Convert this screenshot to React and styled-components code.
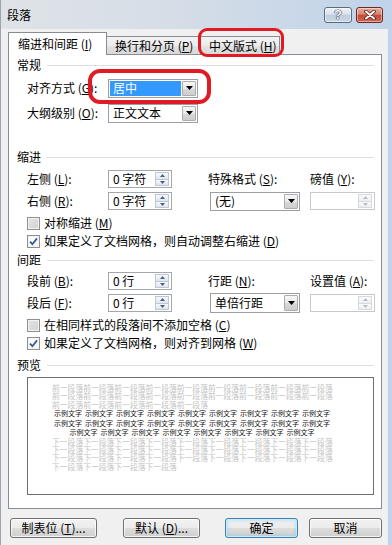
import React from 'react';
import styled, { createGlobalStyle } from 'styled-components';

const GlobalStyle = createGlobalStyle`
  html, body { margin: 0; padding: 0; background: #f0f0f0; }
  body { font-family: "Noto Sans CJK SC", "Liberation Sans", sans-serif; font-size: 12px; color: #000; }
  * { box-sizing: border-box; }
`;

const Window = styled.div`
  width: 392px;
  height: 545px;
  display: flex;
  flex-direction: column;
  background: linear-gradient(90deg, #dfe3e8 0%, #d5dde6 45%, #c0d3ea 100%);
  border-left: 1px solid #9aa5b1;
  overflow: hidden;
`;

const TitleBar = styled.div`
  flex: none;
  height: 29px;
  display: flex;
  align-items: center;
  gap: 4px;
  padding: 0 9px 0 6px;
`;

const TitleText = styled.div`
  flex: 1;
  font-size: 12px;
  line-height: 14px;
  margin-top: 1px;
`;

const CaptionButton = styled.div`
  width: ${(p) => p.$w}px;
  height: 16px;
  border-radius: 3px;
  border: 1px solid ${(p) => (p.$close ? '#6b2b22' : '#5b6d83')};
  background: ${(p) =>
    p.$close
      ? 'linear-gradient(#eaa99c, #d98472 45%, #c24b36 50%, #cf6650 100%)'
      : 'linear-gradient(#eef2f7, #d9e2ed 45%, #bfcddd 50%, #cbd8e7 100%)'};
  box-shadow: inset 0 0 0 1px rgba(255, 255, 255, 0.45);
  display: flex;
  align-items: center;
  justify-content: center;
`;

const HelpGlyph = styled.span`
  font-family: "Liberation Sans", sans-serif;
  font-weight: bold;
  font-size: 13px;
  line-height: 13px;
  color: #f4f6f9;
  text-shadow: 0 0 1px #2f3d50, 0 0 1px #2f3d50, 0 0 1px #2f3d50;
`;

const Body = styled.div`
  flex: 1;
  background: #f0f0f0;
  margin-right: 4px;
  padding: 3px 5px 0 7px;
  display: flex;
  flex-direction: column;
  border-right: 1px solid #e6eef7;
`;

const TabStrip = styled.div`
  display: flex;
  align-items: flex-end;
  height: 23px;
  margin-bottom: -1px;
  position: relative;
  z-index: 2;
`;

const Tab = styled.div`
  position: relative;
  width: ${(p) => p.$w}px;
  height: ${(p) => (p.$active ? 23 : 18)}px;
  margin-bottom: ${(p) => (p.$active ? 0 : 1)}px;
  margin-left: ${(p) => (p.$first ? 0 : -1)}px;
  border: 1px solid #898c95;
  border-bottom: none;
  background: ${(p) =>
    p.$active ? '#ffffff' : 'linear-gradient(#f3f3f3, #ececec 50%, #e2e2e2 51%, #d9d9d9)'};
  display: flex;
  align-items: center;
  padding-left: ${(p) => p.$pl}px;
  padding-bottom: ${(p) => (p.$active ? 1 : 0)}px;
  font-size: 12px;
  line-height: 14px;
  white-space: nowrap;
`;

const TabMark = styled.div`
  position: absolute;
  left: -3px;
  top: -9px;
  width: 86px;
  height: 29px;
  border: 3px solid #e01b24;
  border-radius: 9px;
  pointer-events: none;
`;

const Panel = styled.div`
  height: 455px;
  background: #fff;
  border: 1px solid #898c95;
  padding: 3px 7px 0 8px;
  display: flex;
  flex-direction: column;
`;

const SectionTitle = styled.div`
  display: flex;
  align-items: center;
  gap: 6px;
  height: 14px;
  line-height: 14px;
  margin-top: ${(p) => p.$mt || 0}px;
  white-space: nowrap;
  &::after {
    content: '';
    flex: 1;
    height: 1px;
    background: #dcdfe3;
  }
`;

const GeneralRows = styled.div`
  display: flex;
  flex-direction: column;
  gap: 3px;
  margin: 5px 0 0 10px;
`;

const FormRow = styled.div`
  display: grid;
  grid-template-columns: 81px auto;
  align-items: center;
  height: 22px;
`;

const Label = styled.div`
  font-size: 12px;
  line-height: 14px;
  white-space: nowrap;
  margin-left: ${(p) => p.$ml || 0}px;
`;

const U = styled.span`
  text-decoration: underline;
  text-underline-offset: 1px;
`;

const SelectBox = styled.div`
  position: relative;
  width: ${(p) => p.$w}px;
  height: ${(p) => p.$h || 19}px;
  border: 1px solid #9a9ea5;
  background: #fff;
  display: flex;
  padding: 1px;
`;

const SelectValue = styled.div`
  flex: 1;
  display: flex;
  align-items: center;
  padding-left: 3px;
  margin-right: 1px;
  font-size: 12px;
  line-height: 14px;
  white-space: nowrap;
  background: ${(p) => (p.$selected ? '#3399ff' : 'transparent')};
  color: ${(p) => (p.$selected ? '#fff' : '#000')};
`;

const DropButton = styled.div`
  width: 14px;
  border: 1px solid #acacac;
  border-radius: 1px;
  background: linear-gradient(#f7f7f7, #e8e8e8 50%, #d9d9d9 51%, #cdcdcd);
  display: flex;
  align-items: center;
  justify-content: center;
`;

const SelectMark = styled.div`
  position: absolute;
  left: -21px;
  top: -11px;
  width: 123px;
  height: 35px;
  border: 4px solid #e01b24;
  border-radius: 12px;
  pointer-events: none;
`;

const SpinBox = styled.div`
  width: ${(p) => p.$w}px;
  height: 18px;
  border: 1px solid ${(p) => (p.$disabled ? '#c6c9ce' : '#a3a7ae')};
  background: #fff;
  display: flex;
  padding: 1px;
`;

const SpinText = styled.div`
  flex: 1;
  display: flex;
  align-items: center;
  padding-left: 3px;
  font-size: 12px;
  line-height: 14px;
  white-space: nowrap;
`;

const SpinButtons = styled.div`
  width: 14px;
  margin-right: 1px;
  display: flex;
  flex-direction: column;
`;

const SpinHalf = styled.div`
  flex: 1;
  border: 1px solid ${(p) => (p.$disabled ? '#d6d9de' : '#c1c7d1')};
  background: ${(p) =>
    p.$disabled ? 'linear-gradient(#fafafa, #eeeeee)' : 'linear-gradient(#f7f9fc, #dfe5ee)'};
  display: flex;
  align-items: center;
  justify-content: center;
  & + & {
    border-top: none;
  }
`;

const FieldGrid = styled.div`
  display: grid;
  grid-template-columns: 81px 64px 38px 100px 65px;
  grid-auto-rows: 22px;
  align-items: center;
  margin: ${(p) => p.$mt}px 0 0 10px;
`;

const CheckRows = styled.div`
  display: flex;
  flex-direction: column;
  margin: 2px 0 0 10px;
`;

const CheckRow = styled.div`
  height: 18px;
  display: flex;
  align-items: center;
  gap: 4px;
  font-size: 12px;
  line-height: 14px;
  white-space: nowrap;
`;

const CheckBoxBox = styled.span`
  flex: none;
  width: 13px;
  height: 13px;
  border: 1px solid #8e8f8f;
  background: ${(p) =>
    p.$checked ? 'linear-gradient(135deg, #ffffff, #eef0f3)' : 'linear-gradient(135deg, #e4e4e4, #d2d2d2)'};
  box-shadow: inset 0 0 0 1px #f3f3f3;
  display: flex;
  align-items: center;
  justify-content: center;
`;

const Preview = styled.div`
  margin: 5px 0 0 10px;
  height: 118px;
  border: 1px solid #6e6e6e;
  background: #fff;
  padding: 6px 0 0 24px;
`;

const GrayLine = styled.div`
  height: 8.4px;
  font-size: 7.8px;
  line-height: 8.4px;
  color: #c4c4c4;
  white-space: nowrap;
`;

const SampleLine = styled.div`
  width: 280px;
  height: 9.5px;
  display: flex;
  justify-content: center;
  gap: 3px;
  font-size: 7px;
  line-height: 9.5px;
  color: #111;
  white-space: nowrap;
`;

const ButtonRow = styled.div`
  display: flex;
  margin-top: 9px;
`;

const Button = styled.div`
  width: ${(p) => p.$w}px;
  height: 20px;
  margin-left: ${(p) => p.$ml}px;
  border-radius: 3px;
  border: 1px solid ${(p) => (p.$default ? '#3c7fb1' : '#707070')};
  background: linear-gradient(#f2f2f2, #ebebeb 50%, #dddddd 51%, #cfcfcf);
  box-shadow: ${(p) =>
    p.$default
      ? 'inset 0 0 0 1px #c9ecfd, inset 0 0 3px 2px rgba(110, 200, 245, 0.35)'
      : 'inset 0 0 0 1px rgba(255,255,255,0.75)'};
  display: flex;
  align-items: center;
  justify-content: center;
  font-size: 12px;
  line-height: 14px;
  white-space: nowrap;
`;

const DownArrow = ({ color = '#000' }) => (
  <svg width="7" height="4" viewBox="0 0 7 4">
    <polygon points="0,0 7,0 3.5,4" fill={color} />
  </svg>
);

const Select = ({ w, h, value, selected, mark }) => (
  <SelectBox $w={w} $h={h}>
    <SelectValue $selected={selected}>{value}</SelectValue>
    <DropButton>
      <DownArrow />
    </DropButton>
    {mark && <SelectMark />}
  </SelectBox>
);

const Spin = ({ w, value, disabled }) => {
  const c = disabled ? '#b8bcc4' : '#4c5e82';
  return (
    <SpinBox $w={w} $disabled={disabled}>
      <SpinText>{value}</SpinText>
      <SpinButtons>
        <SpinHalf $disabled={disabled}>
          <svg width="5" height="3" viewBox="0 0 5 3">
            <polygon points="0,3 5,3 2.5,0" fill={c} />
          </svg>
        </SpinHalf>
        <SpinHalf $disabled={disabled}>
          <svg width="5" height="3" viewBox="0 0 5 3">
            <polygon points="0,0 5,0 2.5,3" fill={c} />
          </svg>
        </SpinHalf>
      </SpinButtons>
    </SpinBox>
  );
};

const CheckBox = ({ checked, children }) => (
  <CheckRow>
    <CheckBoxBox $checked={checked}>
      {checked && (
        <svg width="9" height="9" viewBox="0 0 9 9">
          <path d="M1 4.6 L3.4 7.2 L8 1.4" fill="none" stroke="#3f5690" strokeWidth="1.8" />
        </svg>
      )}
    </CheckBoxBox>
    <span>{children}</span>
  </CheckRow>
);

const CloseGlyph = () => (
  <svg width="14" height="10" viewBox="0 0 14 10">
    <path d="M3 1.5 L11 8.5 M11 1.5 L3 8.5" stroke="#5a1c14" strokeWidth="3.6" strokeLinecap="round" />
    <path d="M3 1.5 L11 8.5 M11 1.5 L3 8.5" stroke="#ffffff" strokeWidth="2" strokeLinecap="round" />
  </svg>
);

const rep = (s, n) => Array.from({ length: n }, () => s).join('');

export default function App() {
  const before = [rep('前一段落', 9), rep('前一段落', 9), rep('前一段落', 5)];
  const after = [rep('下一段落', 9), rep('下一段落', 9), rep('下一段落', 9), rep('下一段落', 4)];
  const sample = [9, 9, 8];
  return (
    <>
      <GlobalStyle />
      <Window>
        <TitleBar>
          <TitleText>段落</TitleText>
          <CaptionButton $w={28}>
            <HelpGlyph>?</HelpGlyph>
          </CaptionButton>
          <CaptionButton $w={27} $close>
            <CloseGlyph />
          </CaptionButton>
        </TitleBar>
        <Body>
          <TabStrip>
            <Tab $first $active $w={99} $pl={9}>
              缩进和间距 (<U>I</U>)
            </Tab>
            <Tab $w={95} $pl={8}>
              换行和分页 (<U>P</U>)
            </Tab>
            <Tab $w={80} $pl={8}>
              中文版式 (<U>H</U>)
              <TabMark />
            </Tab>
          </TabStrip>
          <Panel>
            <SectionTitle>常规</SectionTitle>
            <GeneralRows>
              <FormRow>
                <Label>
                  对齐方式 (<U>G</U>):
                </Label>
                <Select w={90} value="居中" selected mark />
              </FormRow>
              <FormRow>
                <Label>
                  大纲级别 (<U>O</U>):
                </Label>
                <Select w={90} value="正文文本" />
              </FormRow>
            </GeneralRows>

            <SectionTitle $mt={26}>缩进</SectionTitle>
            <FieldGrid $mt={4}>
              <Label>
                左侧 (<U>L</U>):
              </Label>
              <Spin w={64} value="0 字符" />
              <span />
              <Label $ml={-2}>
                特殊格式 (<U>S</U>):
              </Label>
              <Label>
                磅值 (<U>Y</U>):
              </Label>
              <Label>
                右侧 (<U>R</U>):
              </Label>
              <Spin w={64} value="0 字符" />
              <span />
              <Select w={90} h={19} value="(无)" />
              <Spin w={65} value="" disabled />
            </FieldGrid>
            <CheckRows>
              <CheckBox>
                对称缩进 (<U>M</U>)
              </CheckBox>
              <CheckBox checked>
                如果定义了文档网格，则自动调整右缩进 (<U>D</U>)
              </CheckBox>
            </CheckRows>

            <SectionTitle $mt={3}>间距</SectionTitle>
            <FieldGrid $mt={3}>
              <Label>
                段前 (<U>B</U>):
              </Label>
              <Spin w={64} value="0 行" />
              <span />
              <Label $ml={-2}>
                行距 (<U>N</U>):
              </Label>
              <Label>
                设置值 (<U>A</U>):
              </Label>
              <Label>
                段后 (<U>F</U>):
              </Label>
              <Spin w={64} value="0 行" />
              <span />
              <Select w={90} h={20} value="单倍行距" />
              <Spin w={65} value="" disabled />
            </FieldGrid>
            <CheckRows>
              <CheckBox>
                在相同样式的段落间不添加空格 (<U>C</U>)
              </CheckBox>
              <CheckBox checked>
                如果定义了文档网格，则对齐到网格 (<U>W</U>)
              </CheckBox>
            </CheckRows>

            <SectionTitle $mt={6}>预览</SectionTitle>
            <Preview>
              {before.map((t, i) => (
                <GrayLine key={'b' + i}>{t}</GrayLine>
              ))}
              {sample.map((n, i) => (
                <SampleLine key={'s' + i}>
                  {Array.from({ length: n }, (_, j) => (
                    <span key={j}>示例文字</span>
                  ))}
                </SampleLine>
              ))}
              {after.map((t, i) => (
                <GrayLine key={'a' + i}>{t}</GrayLine>
              ))}
            </Preview>
          </Panel>
          <ButtonRow>
            <Button $w={87} $ml={2}>
              制表位 (<U>T</U>)...
            </Button>
            <Button $w={77} $ml={26}>
              默认 (<U>D</U>)...
            </Button>
            <Button $w={73} $ml={25} $default>
              确定
            </Button>
            <Button $w={73} $ml={11}>
              取消
            </Button>
          </ButtonRow>
        </Body>
      </Window>
    </>
  );
}
